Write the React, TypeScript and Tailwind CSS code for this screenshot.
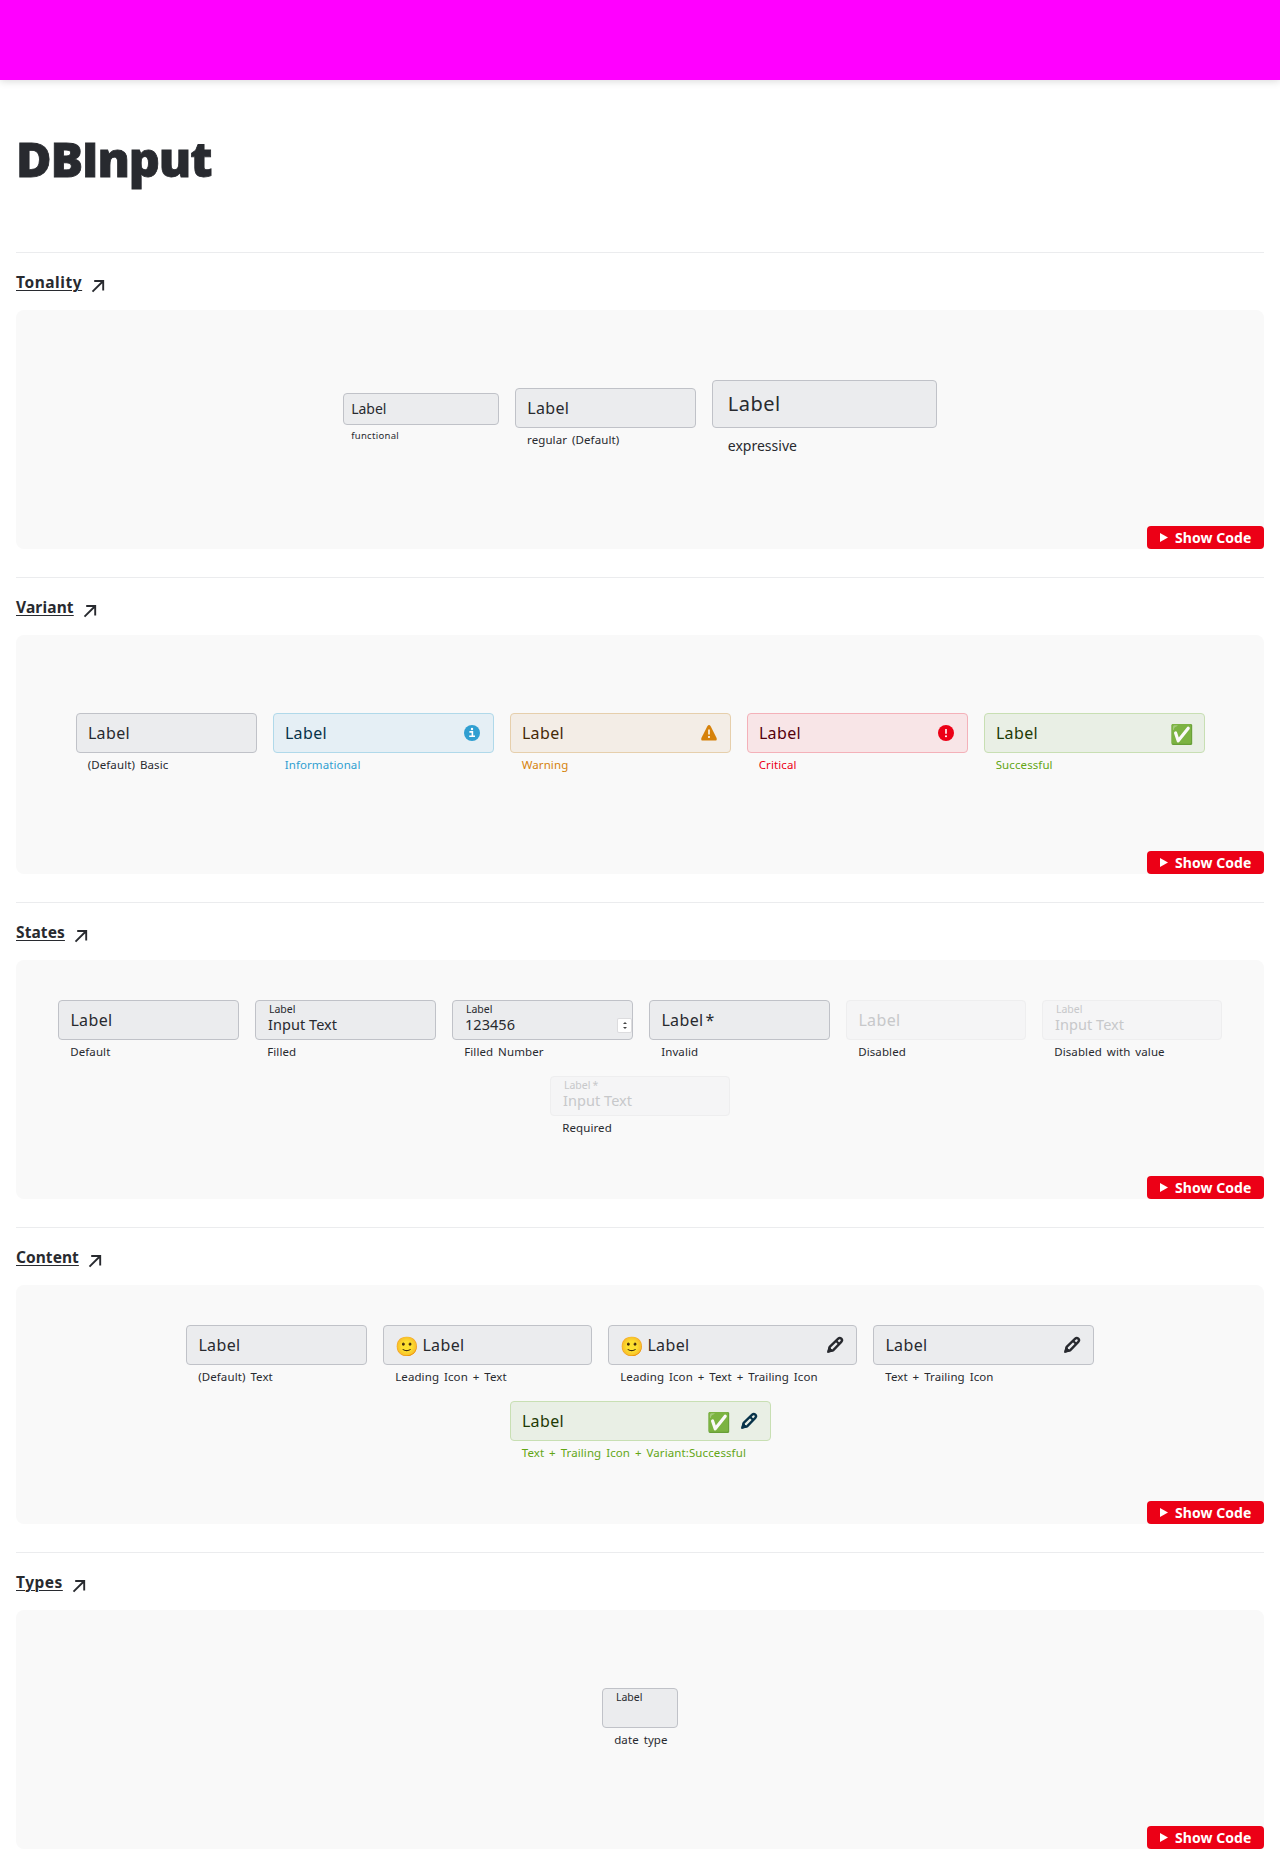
import type { ReactNode } from 'react';

type Tone = 'basic' | 'info' | 'warning' | 'critical' | 'success' | 'disabled';

const tones: Record<Tone, { box: string; label: string; caption: string }> = {
  basic: { box: 'bg-[#ebecee] border-[#c0c2c8]', label: 'text-[#282a2f]', caption: 'text-[#282a2f]' },
  info: { box: 'bg-[#e5eff5] border-[#b0d9ea]', label: 'text-[#08334a]', caption: 'text-[#309fd1]' },
  warning: { box: 'bg-[#f3ede6] border-[#e6cfac]', label: 'text-[#452a08]', caption: 'text-[#d6820b]' },
  critical: { box: 'bg-[#f8e5e7] border-[#f4b1b9]', label: 'text-[#55000c]', caption: 'text-[#ec0016]' },
  success: { box: 'bg-[#e9efe5] border-[#c8dfb3]', label: 'text-[#1f3a05]', caption: 'text-[#63a615]' },
  disabled: { box: 'bg-[#f5f5f6] border-[#eeeeef]', label: 'text-[#c7c8ca]', caption: 'text-[#282a2f]' },
};

function InfoIcon() {
  return (
    <svg className="size-5" viewBox="0 0 20 20" fill="none">
      <circle cx="10" cy="10" r="8" fill="#309fd1" />
      <path d="M7.4 8.9h3v4.3M7.2 13.2h5.8" stroke="#fff" strokeWidth="1.6" />
      <circle cx="10" cy="6" r="1.2" fill="#fff" />
    </svg>
  );
}

function WarningIcon() {
  return (
    <svg className="size-5" viewBox="0 0 20 20" fill="none">
      <path d="M8.2 3.4Q10 .8 11.8 3.4L17.6 15q.6 2.6-1.2 2.6H3.6Q1.8 17.6 2.4 15z" fill="#d6820b" />
      <path d="M10 6.4v5" stroke="#fff" strokeWidth="1.5" />
      <circle cx="10" cy="14" r="1.05" fill="#fff" />
    </svg>
  );
}

function CriticalIcon() {
  return (
    <svg className="size-5" viewBox="0 0 20 20" fill="none">
      <circle cx="10" cy="10" r="8" fill="#ec0016" />
      <path d="M10 6v4.7" stroke="#fff" strokeWidth="1.6" />
      <circle cx="10" cy="13.2" r="1.05" fill="#fff" />
    </svg>
  );
}

function PencilIcon({ color = '#282a2f' }: { color?: string }) {
  return (
    <svg className="size-5" viewBox="0 0 20 20" fill="none" stroke={color} strokeWidth="2.4" strokeLinejoin="round">
      <path d="M3.6 16.4 4.7 11.9 13.2 3.7a2.1 2.1 0 0 1 3.1 3.1L8.1 15.3z" />
      <path d="m11 5.8 3.2 3.2" strokeWidth="2.2" />
      <path d="m2.6 17.4 1.5-5.2 3.7 3.7z" fill={color} strokeWidth="1" />
    </svg>
  );
}

function Emoji({ children }: { children: ReactNode }) {
  return <span className="block w-[23px] text-[19px] leading-6 text-black">{children}</span>;
}

type FieldProps = {
  label: string;
  caption: string;
  width?: string;
  tone?: Tone;
  value?: string;
  small?: boolean;
  required?: boolean;
  leading?: ReactNode;
  trailing?: ReactNode;
  spinner?: boolean;
};

function Field({ label, caption, width = 'w-[181px]', tone = 'basic', value, small, required, leading, trailing, spinner }: FieldProps) {
  const t = tones[tone];
  const floating = small || value !== undefined;
  return (
    <div className={`${width} h-[60px] shrink-0`}>
      <div className={`relative flex h-10 items-center rounded border pl-[11.4px] pr-[11px] ${t.box} ${t.label}`}>
        {leading && <span className="mr-[4px] mt-[3px]">{leading}</span>}
        {floating ? (
          <div className="flex h-full flex-col whitespace-nowrap">
            <span className="h-[13px] pl-[1.5px] text-[10.5px] leading-4">
              {label}
              {required && <span className="pl-[2px]">*</span>}
            </span>
            <span className="h-5 pl-[0.6px] text-[14.5px] leading-5 tracking-[0.05px]">{value}</span>
          </div>
        ) : (
          <span className="whitespace-nowrap text-base leading-6 tracking-[0.35px]">
            {label}
            {required && <span className="pl-[2px]">*</span>}
          </span>
        )}
        {trailing && <span className="ml-auto flex items-center gap-[9px]">{trailing}</span>}
        {spinner && (
          <span className="absolute bottom-[7px] right-[1px] flex h-[13px] w-[13px] flex-col items-center justify-center gap-[3px] rounded-[1px] bg-white ring-1 ring-[#dcdcde]">
            <span className="size-0 border-x-2 border-b-2 border-x-transparent border-b-[#444]" />
            <span className="size-0 border-x-2 border-t-2 border-x-transparent border-t-[#444]" />
          </span>
        )}
      </div>
      <p className={`whitespace-nowrap pl-[12.2px] pt-1 text-[11.5px] leading-4 tracking-[0.1px] [word-spacing:1.8px] ${t.caption}`}>{caption}</p>
    </div>
  );
}

type SectionProps = { title: string; tracking: string; children: ReactNode; double?: boolean };

function Section({ title, tracking, children, double }: SectionProps) {
  return (
    <section className="h-[325px] border-t border-[#ebecee]">
      <h2 className={`flex h-[56.6px] items-start pt-[17px] text-[15.5px] font-bold leading-6 text-[#282a2f] ${tracking}`}>
        <span className="underline decoration-1 underline-offset-2">{title}</span>
        <svg className="ml-[9px] mt-[9px] size-[14px]" viewBox="0 0 14 14" fill="none" stroke="#282a2f" strokeWidth="1.9">
          <path d="M1.5 12.7 12.2 2M3.2 2h9v9.4" />
        </svg>
      </h2>
      <div className="flex h-[239.9px] flex-col rounded-t-lg rounded-bl-lg bg-[#f9f9f9]">
        <div className={`flex flex-1 flex-wrap content-start justify-center gap-4 px-[38px] ${double ? 'pt-10' : 'pt-[78px]'}`}>{children}</div>
        <button className="flex h-[23.9px] w-[117px] items-center self-end rounded bg-[#ec0016] pl-[13px] text-[14px] font-bold leading-6 tracking-[0.05px] text-white">
          <svg className="mr-[6px] size-[9px]" viewBox="0 0 9 9" fill="white"><path d="M0 0 8 4.5 0 9z" /></svg>
          <span className="whitespace-nowrap">Show Code</span>
        </button>
      </div>
    </section>
  );
}

export default function App() {
  return (
    <div className="h-[1865px] overflow-hidden bg-white font-['Noto_Sans',sans-serif]">
      <header className="h-20 bg-[#ff00ff] shadow-[0_1px_8px_rgba(0,0,0,0.16)]" />
      <main className="px-4">
        <h1 className="h-[172px] pt-[46px] font-['Open_Sans',sans-serif] text-[48.5px] font-extrabold leading-[64px] tracking-[-1.2px] text-[#282a2f] [-webkit-text-stroke:0.8px_#282a2f]">
          DBInput
        </h1>
        <Section title="Tonality" tracking="tracking-[0.55px]">
          <div className="h-[60px] w-[155.67px] pt-[5px]">
            <div className="h-8 rounded border border-[#c0c2c8] bg-[#ebecee] pl-[7px] text-[14px] leading-[30px] text-[#282a2f]">Label</div>
            <p className="pl-2 pt-[3px] text-[9.5px] leading-4 tracking-[0.3px] text-[#282a2f]">functional</p>
          </div>
          <Field label="Label" caption="regular (Default)" />
          <div className="-mt-2 h-[76px] w-[225px]">
            <div className="h-12 rounded border border-[#c0c2c8] bg-[#ebecee] pl-[15px] text-[20px] leading-[46px] tracking-[0.5px] text-[#282a2f]">Label</div>
            <p className="pl-4 pt-[6px] text-[14px] leading-6 text-[#282a2f]">expressive</p>
          </div>
        </Section>
        <Section title="Variant" tracking="tracking-[0.15px]">
          <Field label="Label" caption="(Default) Basic" />
          <Field width="w-[221px]" tone="info" label="Label" caption="Informational" trailing={<InfoIcon />} />
          <Field width="w-[221px]" tone="warning" label="Label" caption="Warning" trailing={<WarningIcon />} />
          <Field width="w-[221px]" tone="critical" label="Label" caption="Critical" trailing={<CriticalIcon />} />
          <Field width="w-[221px]" tone="success" label="Label" caption="Successful" trailing={<span className="mt-[3px]"><Emoji>✅</Emoji></span>} />
        </Section>
        <Section title="States" tracking="tracking-[0.1px]" double>
          <Field label="Label" caption="Default" />
          <Field label="Label" caption="Filled" value="Input Text" />
          <Field label="Label" caption="Filled Number" value="123456" spinner />
          <Field label="Label" caption="Invalid" required />
          <Field width="w-[180px]" label="Label" caption="Disabled" tone="disabled" />
          <Field width="w-[180px]" label="Label" caption="Disabled with value" tone="disabled" value="Input Text" />
          <Field width="w-[180px]" label="Label" caption="Required" tone="disabled" value="Input Text" required />
        </Section>
        <Section title="Content" tracking="tracking-[0.05px]" double>
          <Field label="Label" caption="(Default) Text" />
          <Field width="w-[209px]" label="Label" caption="Leading Icon + Text" leading={<Emoji>🙂</Emoji>} />
          <Field width="w-[249px]" label="Label" caption="Leading Icon + Text + Trailing Icon" leading={<Emoji>🙂</Emoji>} trailing={<PencilIcon />} />
          <Field width="w-[221px]" label="Label" caption="Text + Trailing Icon" trailing={<PencilIcon />} />
          <Field
            width="w-[261px]"
            tone="success"
            label="Label"
            caption="Text + Trailing Icon + Variant:Successful"
            trailing={<><span className="mt-[3px]"><Emoji>✅</Emoji></span><PencilIcon color="#08334a" /></>}
          />
        </Section>
        <Section title="Types" tracking="tracking-[0.5px]">
          <Field width="w-[76px]" label="Label" caption="date type" small />
        </Section>
      </main>
    </div>
  );
}
